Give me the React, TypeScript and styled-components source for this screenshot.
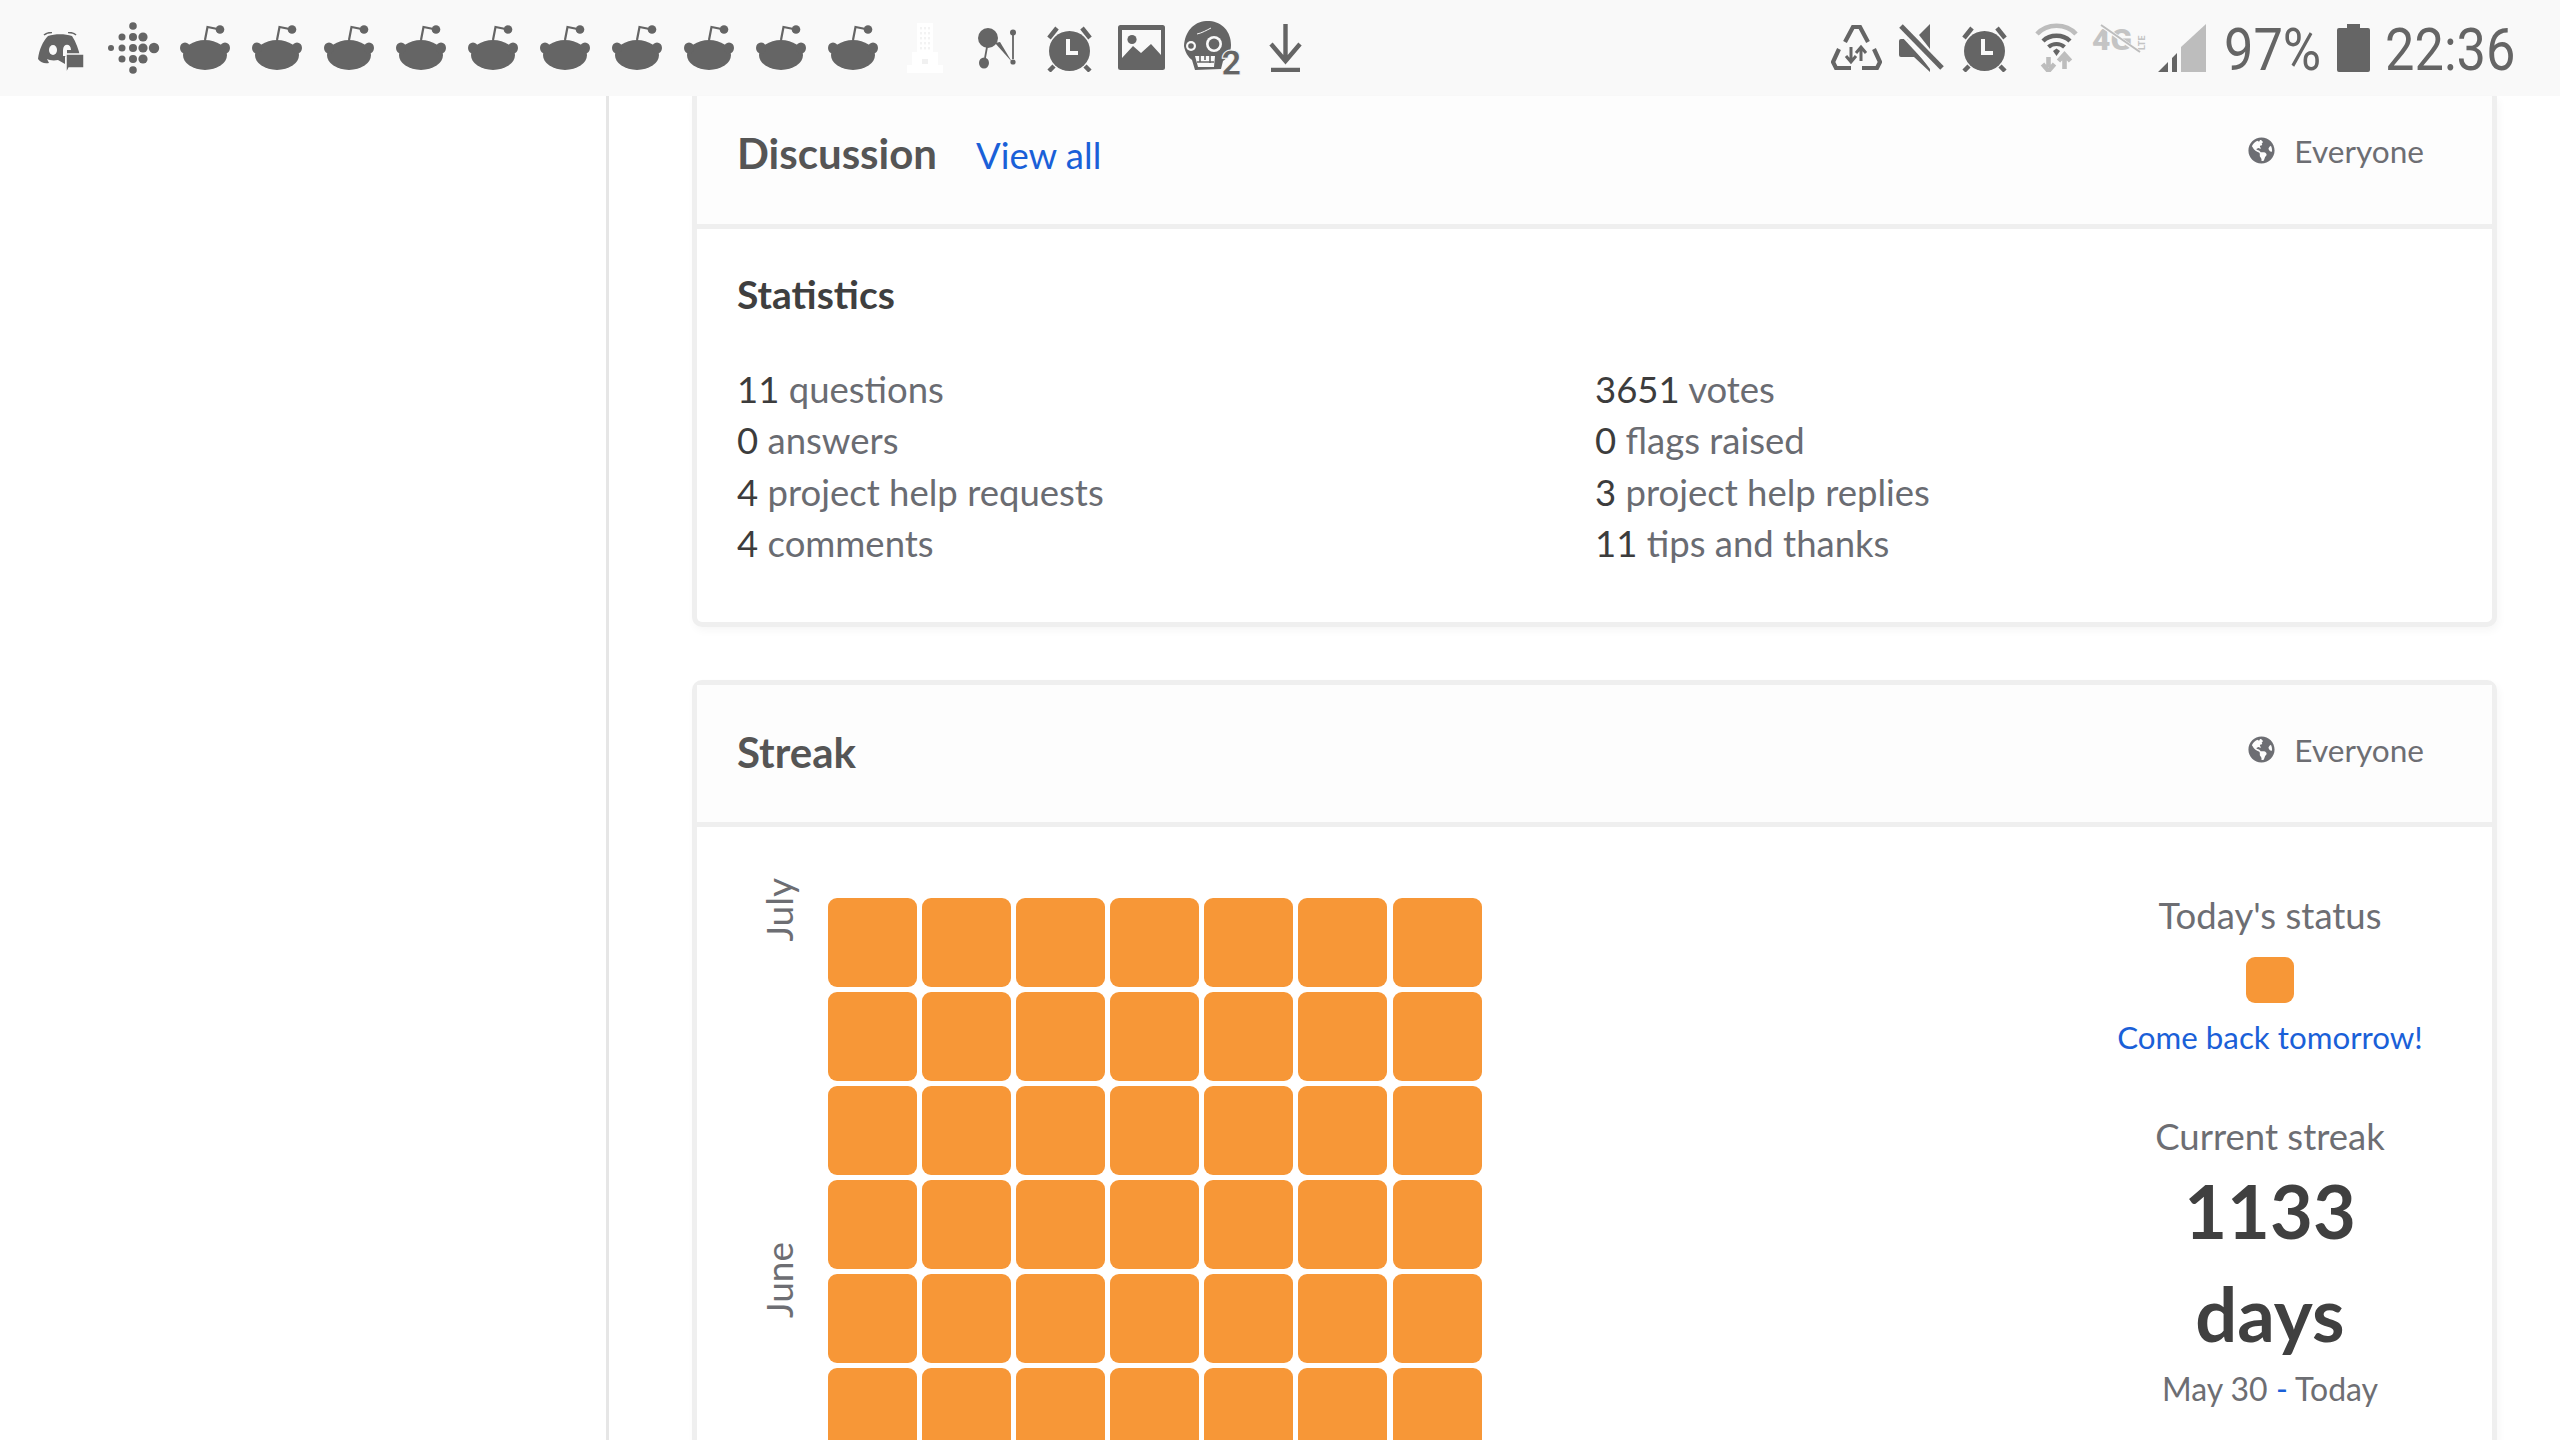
import React from 'react'
import styled, { createGlobalStyle } from 'styled-components'
import { FaGlobeAmericas } from 'react-icons/fa'

const ICON = '#656565'
const ORANGE = '#f79737'
const BLUE = '#1a60d8'
const BORDER = '#efefef'

const GlobalStyle = createGlobalStyle`
  html, body {
    margin: 0;
    padding: 0;
    background: #fff;
    overflow: hidden;
  }
  body {
    font-family: Lato, "Open Sans", sans-serif;
  }
`

const Page = styled.div`
  width: 2560px;
  height: 1440px;
  overflow: hidden;
  display: flex;
  flex-direction: column;
`

const StatusBar = styled.div`
  flex: none;
  height: 96px;
  display: flex;
  align-items: flex-start;
  padding: 0 44px 0 25px;
  background: #f9f9f9;
  overflow: hidden;
`

const Slot = styled.div`
  flex: none;
  width: 72px;
  height: 96px;
  display: flex;
  justify-content: center;
  align-items: flex-start;
`

const StatusRight = styled.div`
  margin-left: auto;
  display: flex;
  align-items: flex-start;
`

const StatusIcon = styled.svg<{ $left?: number; $top?: number }>`
  display: block;
  flex: none;
  margin-left: ${({ $left }) => $left || 0}px;
  margin-top: ${({ $top }) => $top || 0}px;
`

const StatusText = styled.div<{ $left: number; $width: number; $natural: number }>`
  flex: none;
  width: ${({ $width }) => $width}px;
  margin-left: ${({ $left }) => $left}px;
  height: 96px;
  font-family: Roboto, sans-serif;
  font-weight: 400;
  font-size: 60px;
  line-height: 99px;
  color: ${ICON};
  white-space: nowrap;
  transform-origin: left center;
  transform: scaleX(${({ $width, $natural }) => $width / $natural});
`

const Main = styled.div`
  flex: 1;
  display: flex;
  min-height: 0;
`

const Sidebar = styled.div`
  flex: none;
  width: 606px;
  border-right: 3px solid #e6e6e6;
`

const Content = styled.div`
  flex: none;
  width: 1805px;
  margin-left: 83px;
  display: flex;
  flex-direction: column;
  gap: 53px;
`

const Card = styled.section<{ $clipped?: boolean }>`
  flex: none;
  border: 5px solid ${BORDER};
  border-top-width: ${({ $clipped }) => ($clipped ? 0 : 5)}px;
  border-radius: ${({ $clipped }) => ($clipped ? '0 0 10px 10px' : '10px')};
  box-shadow: 2px 4px 8px rgba(0, 0, 0, 0.035);
  background: #fff;
`

const CardHeader = styled.header<{ $clipped?: boolean }>`
  box-sizing: border-box;
  height: ${({ $clipped }) => ($clipped ? 128 : 137)}px;
  padding: ${({ $clipped }) => ($clipped ? '0 68px 14px 40px' : '0 68px 2px 40px')};
  display: flex;
  align-items: center;
  background: #fdfdfd;
`

const CardTitle = styled.h2`
  margin: 0;
  font-size: 42px;
  line-height: 52px;
  font-weight: 700;
  color: #555555;
`

const ViewAll = styled.a`
  margin-left: 39px;
  padding-top: 3px;
  font-size: 36.5px;
  line-height: 52px;
  color: ${BLUE};
`

const Audience = styled.div`
  margin-left: auto;
  margin-bottom: 5px;
  display: flex;
  align-items: center;
  gap: 19px;
  font-size: 31.6px;
  line-height: 40px;
  color: #6d6e73;

  svg {
    width: 27px;
    height: 27px;
    fill: #6d6e73;
  }
`

const StatsBody = styled.div`
  border-top: 5px solid ${BORDER};
  padding: 40px 40px 52px;
`

const SectionTitle = styled.h3`
  margin: 0 0 45px;
  font-size: 39px;
  line-height: 50px;
  font-weight: 700;
  color: #3f3f3f;
`

const StatsGrid = styled.div`
  display: grid;
  grid-template-columns: 858px 1fr;
`

const Stat = styled.div`
  font-size: 36.5px;
  line-height: 51.4px;
  color: #6a6c72;

  b {
    font-weight: 400;
    color: #3c3c3c;
  }
`

const StreakBody = styled.div`
  border-top: 5px solid ${BORDER};
  padding: 71px 52px 0 62px;
  display: flex;
  justify-content: space-between;
  align-items: flex-start;
`

const Chart = styled.div`
  display: flex;
`

const Months = styled.div`
  width: 69px;
  display: grid;
  grid-auto-rows: 89px;
  row-gap: 5.1px;
`

const MonthCell = styled.div`
  height: 44px;
  display: flex;
  flex-direction: column;
  justify-content: flex-end;
`

const Month = styled.span`
  writing-mode: vertical-rl;
  transform: rotate(180deg);
  white-space: nowrap;
  font-size: 37px;
  line-height: 40px;
  width: 40px;
  color: #6d6e73;
`

const Squares = styled.div`
  display: grid;
  grid-template-columns: repeat(7, 89px);
  grid-auto-rows: 89px;
  gap: 5.1px;
`

const Square = styled.div`
  background: ${ORANGE};
  border-radius: 9px;
`

const Summary = styled.div`
  flex: none;
  width: 340px;
  display: flex;
  flex-direction: column;
  align-items: center;
  text-align: center;
  margin-top: -6px;
`

const SummaryLabel = styled.div`
  font-size: 36.5px;
  line-height: 46px;
  color: #6d6e73;
`

const TodaySquare = styled.div`
  width: 48px;
  height: 46px;
  margin-top: 19px;
  background: ${ORANGE};
  border-radius: 9px;
`

const ComeBack = styled.a`
  margin: 12px 0 54px;
  font-size: 31.3px;
  line-height: 44px;
  color: ${BLUE};
`

const BigNumber = styled.div`
  font-size: 74px;
  line-height: 103px;
  font-weight: 700;
  color: #404040;
`

const DateRange = styled.div`
  margin-top: 2px;
  font-size: 32px;
  line-height: 44px;
  color: #6d6e73;

  i {
    font-style: normal;
    color: ${BLUE};
  }
`

const Snoo = () => (
  <StatusIcon width="50" height="46" viewBox="0 0 50 46" $top={25} fill={ICON}>
    <ellipse cx="25" cy="30" rx="22" ry="15" />
    <ellipse cx="5" cy="23" rx="5" ry="5.6" />
    <ellipse cx="45" cy="23" rx="5" ry="5.6" />
    <path d="M25 15 L27.5 2 L40 4.5" fill="none" stroke={ICON} strokeWidth="2.2" />
    <circle cx="40" cy="4.5" r="4.3" />
  </StatusIcon>
)

const DiscordChat = () => (
  <StatusIcon width="47" height="42" viewBox="0 0 47 42" $top={32}>
    <path
      fill={ICON}
      d="M10 4 C17 1.5 27 1.5 34 4 C38 10 41 18 42 25 L27 25 L27 32 L20 28 C15 29 11 28 9 27 L11 31 C7 32 3 31 0 27 C1 18 5 9 10 4 Z"
    />
    <ellipse cx="15" cy="18" rx="4" ry="5" fill="#f9f9f9" />
    <path d="M25 24 L25 18 C25 11 33 11 33 18 L29 18 L29 24 Z" fill="#f9f9f9" />
    <path d="M6 3 C9 0.5 12 0.5 14 0.5 M30 0.5 C33 0.5 36 1 38 3" stroke={ICON} strokeWidth="1.6" fill="none" />
    <path fill={ICON} stroke="#f9f9f9" strokeWidth="1.5" d="M28 22 H46 V36 H31 L28 42 Z" />
  </StatusIcon>
)

const Fitbit = () => {
  const dots: [number, number, number][] = [
    [6, 28, 3],
    [17, 17, 3.5], [17, 28, 3.5], [17, 39, 3.5],
    [28, 6, 3.8], [28, 17, 4], [28, 28, 4], [28, 39, 4], [28, 50, 3.8],
    [38, 17, 4.6], [38, 28, 4.6], [38, 39, 4.6],
    [49, 28, 5.2],
  ]
  return (
    <StatusIcon width="56" height="56" viewBox="0 0 56 56" $top={20} fill={ICON}>
      {dots.map(([x, y, r]) => (
        <circle key={`${x}-${y}`} cx={x} cy={y} r={r} />
      ))}
    </StatusIcon>
  )
}

const Building = () => (
  <StatusIcon width="36" height="50" viewBox="0 0 36 50" $top={23}>
    <rect x="10" y="0" width="16" height="30" fill="#ffffff" />
    <rect x="5" y="29" width="26" height="14" fill="#ffffff" />
    <rect x="0" y="42" width="36" height="8" fill="#ffffff" />
    {[4, 9, 14, 19, 24].map((y) =>
      [13, 17, 21].map((x) => <rect key={`${x}-${y}`} x={x} y={y} width="2" height="2.4" fill="#f3f3f3" />),
    )}
    <rect x="15" y="36" width="6" height="5" fill="#f1f1f1" />
  </StatusIcon>
)

const PathIcon = () => (
  <StatusIcon width="38" height="42" viewBox="0 0 38 42" $top={28} fill={ICON}>
    <ellipse cx="10" cy="10" rx="10" ry="10" />
    <ellipse cx="6" cy="35" rx="5" ry="5.5" />
    <circle cx="35" cy="4.5" r="3" />
    <circle cx="35" cy="34" r="2.6" />
    <path d="M9 19 L7 30 M35 7 V31" stroke={ICON} strokeWidth="1.8" fill="none" />
    <path d="M17 15 L34 34 L22 14 Z" />
  </StatusIcon>
)

const Alarm = ({ left }: { left?: number }) => (
  <StatusIcon width="47" height="47" viewBox="0 0 47 47" $top={25} $left={left} fill={ICON}>
    <ellipse cx="23.5" cy="26" rx="20.5" ry="20" />
    <path d="M3 13 L11 3 M44 13 L36 3 M8 41 L3 46 M39 41 L44 46" stroke={ICON} strokeWidth="4.5" fill="none" />
    <path d="M22 14 V28 H32" stroke="#f9f9f9" strokeWidth="4" fill="none" />
  </StatusIcon>
)

const ImageIcon = () => (
  <StatusIcon width="47" height="45" viewBox="0 0 47 45" $top={25}>
    <rect width="47" height="45" rx="2.5" fill={ICON} />
    <rect x="4" y="5" width="39" height="30" fill="#f9f9f9" />
    <circle cx="14" cy="14.5" r="4.6" fill={ICON} />
    <path d="M4 33 L15 21 L23 28 L33 19 L43 30 V41 H4 Z" fill={ICON} />
  </StatusIcon>
)

const Zombie = () => (
  <StatusIcon width="58" height="66" viewBox="0 0 58 66" $top={21}>
    <path
      fill={ICON}
      d="M22 0 C36 -1 47 9 47 24 C47 31 44 37 39 40 L37 48 L11 49 L8 39 C4 36 1 31 0 25 C1 11 9 1 22 0 Z"
    />
    <circle cx="7" cy="25" r="5" fill="#f9f9f9" />
    <circle cx="7" cy="25" r="2.8" fill={ICON} />
    <circle cx="30" cy="23" r="8" fill="#f9f9f9" />
    <circle cx="30" cy="23" r="5.4" fill={ICON} />
    <path d="M13 13 C18 12 23 9 27 7" stroke="#f9f9f9" strokeWidth="1" fill="none" />
    <path d="M11 35 H31 L30 46 H14 Z" fill="#f9f9f9" />
    <path d="M16 35 V41 M21 35 V39 M26 35 V42 M13 41 H30" stroke={ICON} strokeWidth="1.6" />
    <text
      x="47.5"
      y="54"
      textAnchor="middle"
      fontFamily="Roboto, sans-serif"
      fontWeight="900"
      fontSize="35"
      fill={ICON}
      stroke="#f9f9f9"
      strokeWidth="1"
    >
      2
    </text>
  </StatusIcon>
)

const Download = () => (
  <StatusIcon width="33" height="48" viewBox="0 0 33 48" $top={24} fill="none" stroke={ICON} strokeWidth="4.4">
    <path d="M16.5 0 V38 M2 20 L16.5 37 L31 20" />
    <path d="M2 46 H31" strokeWidth="4.5" />
  </StatusIcon>
)

const Recycle = () => (
  <StatusIcon width="51" height="46" viewBox="0 0 51 46" $top={25} fill="none" stroke={ICON} strokeWidth="4.2">
    <path d="M14 17 L22 2 H29 L37 17" />
    <path d="M8 24 L2 37 L5 43 H20" />
    <path d="M43 24 L49 37 L46 43 H31" />
    <path d="M20 22 V36 M15 31 L20 37 L25 31" strokeWidth="3" />
    <path d="M30 36 V22 M25 28 L30 22 L35 28" strokeWidth="3" />
  </StatusIcon>
)

const Mute = () => (
  <StatusIcon width="45" height="48" viewBox="0 0 45 48" $left={17} $top={24} fill={ICON}>
    <path d="M31 0 V25 L20 11 Z" />
    <path d="M2 15 H8 L31 45 V48 L15 33 H2 Q0 33 0 31 V17 Q0 15 2 15 Z" />
    <path d="M2 2 L43 44" stroke={ICON} strokeWidth="5" />
    <path d="M0 8 L36 47" stroke="#f9f9f9" strokeWidth="2.5" />
  </StatusIcon>
)

const Wifi = () => (
  <StatusIcon width="43" height="49" viewBox="0 0 43 49" $left={27} $top={23} fill="none">
    <path d="M2 11 C12 0 31 0 41 11" stroke="#bdbdbd" strokeWidth="4.6" />
    <path d="M8 18 C15 11 28 11 35 18" stroke={ICON} strokeWidth="4.4" />
    <path d="M13.5 24 C18 20 25 20 29.5 24" stroke={ICON} strokeWidth="4.2" />
    <path d="M18 28 L21.5 25.5 L25 28 L21.5 33 Z" fill={ICON} />
    <path d="M13.5 34 V44 M7.5 41 L13.5 48 L19.5 41" stroke="#bdbdbd" strokeWidth="4.6" />
    <path d="M29.5 46 V34 M23.5 38 L29.5 31.5 L35.5 38" stroke="#bdbdbd" strokeWidth="4.6" />
  </StatusIcon>
)

const NetworkType = () => (
  <StatusIcon width="56" height="44" viewBox="0 -8 56 44" $left={14} $top={17}>
    <text
      x="0"
      y="25"
      textLength="40"
      lengthAdjust="spacingAndGlyphs"
      fontFamily="Roboto, sans-serif"
      fontWeight="900"
      fontSize="29"
      fill="#c4c4c4"
    >
      4G
    </text>
    <text
      x="0"
      y="0"
      transform="translate(53 25) rotate(-90)"
      fontFamily="Roboto, sans-serif"
      fontWeight="700"
      fontSize="9"
      fill="#c4c4c4"
    >
      LTE
    </text>
    <path d="M9 0 L48 28" stroke="#f9f9f9" strokeWidth="4" />
    <path d="M9 0 L48 27" stroke="#bdbdbd" strokeWidth="2" />
  </StatusIcon>
)

const Signal = () => (
  <StatusIcon width="48" height="48" viewBox="0 0 48 48" $left={10} $top={24}>
    <path d="M23 23 L48 0 V48 H23 Z" fill="#bdbdbd" />
    <path d="M0 48 L10 38 V48 Z M14 34 L19 29 V48 H14 Z" fill={ICON} />
  </StatusIcon>
)

const Battery = () => (
  <StatusIcon width="33" height="48" viewBox="0 0 33 48" $left={17} $top={24} fill={ICON}>
    <path d="M10 0 H23 V4 H31 Q33 4 33 6 V46 Q33 48 31 48 H2 Q0 48 0 46 V6 Q0 4 2 4 H10 Z" />
  </StatusIcon>
)

const leftIcons = [
  <DiscordChat key="discord" />,
  <Fitbit key="fitbit" />,
  ...Array.from({ length: 10 }, (_, i) => <Snoo key={`snoo-${i}`} />),
  <Building key="building" />,
  <PathIcon key="path" />,
  <Alarm key="alarm" />,
  <ImageIcon key="image" />,
  <Zombie key="zombie" />,
  <Download key="download" />,
]

const Everyone = () => (
  <Audience>
    <FaGlobeAmericas />
    Everyone
  </Audience>
)

const leftStats: [string, string][] = [
  ['11', 'questions'],
  ['0', 'answers'],
  ['4', 'project help requests'],
  ['4', 'comments'],
]

const rightStats: [string, string][] = [
  ['3651', 'votes'],
  ['0', 'flags raised'],
  ['3', 'project help replies'],
  ['11', 'tips and thanks'],
]

const monthRows = ['July', '', '', '', 'June']

const App: React.FC = () => (
  <Page>
    <GlobalStyle />
    <StatusBar>
      {leftIcons.map((icon) => (
        <Slot key={icon.key}>{icon}</Slot>
      ))}
      <StatusRight>
        <Recycle />
        <Mute />
        <Alarm left={17} />
        <Wifi />
        <NetworkType />
        <Signal />
        <StatusText $left={18} $width={96} $natural={110}>
          97%
        </StatusText>
        <Battery />
        <StatusText $left={15} $width={131} $natural={150}>
          22:36
        </StatusText>
      </StatusRight>
    </StatusBar>
    <Main>
      <Sidebar />
      <Content>
        <Card $clipped>
          <CardHeader $clipped>
            <CardTitle>Discussion</CardTitle>
            <ViewAll>View all</ViewAll>
            <Everyone />
          </CardHeader>
          <StatsBody>
            <SectionTitle>Statistics</SectionTitle>
            <StatsGrid>
              {leftStats.map(([count, label], i) => (
                <React.Fragment key={label}>
                  <Stat>
                    <b>{count}</b> {label}
                  </Stat>
                  <Stat>
                    <b>{rightStats[i][0]}</b> {rightStats[i][1]}
                  </Stat>
                </React.Fragment>
              ))}
            </StatsGrid>
          </StatsBody>
        </Card>
        <Card>
          <CardHeader>
            <CardTitle>Streak</CardTitle>
            <Everyone />
          </CardHeader>
          <StreakBody>
            <Chart>
              <Months>
                {monthRows.map((month, i) => (
                  <MonthCell key={i}>{month && <Month>{month}</Month>}</MonthCell>
                ))}
              </Months>
              <Squares>
                {Array.from({ length: 56 }, (_, i) => (
                  <Square key={i} />
                ))}
              </Squares>
            </Chart>
            <Summary>
              <SummaryLabel>Today's status</SummaryLabel>
              <TodaySquare />
              <ComeBack>Come back tomorrow!</ComeBack>
              <SummaryLabel>Current streak</SummaryLabel>
              <BigNumber>1133</BigNumber>
              <BigNumber>days</BigNumber>
              <DateRange>
                May 30 <i>-</i> Today
              </DateRange>
            </Summary>
          </StreakBody>
        </Card>
      </Content>
    </Main>
  </Page>
)

export default App
